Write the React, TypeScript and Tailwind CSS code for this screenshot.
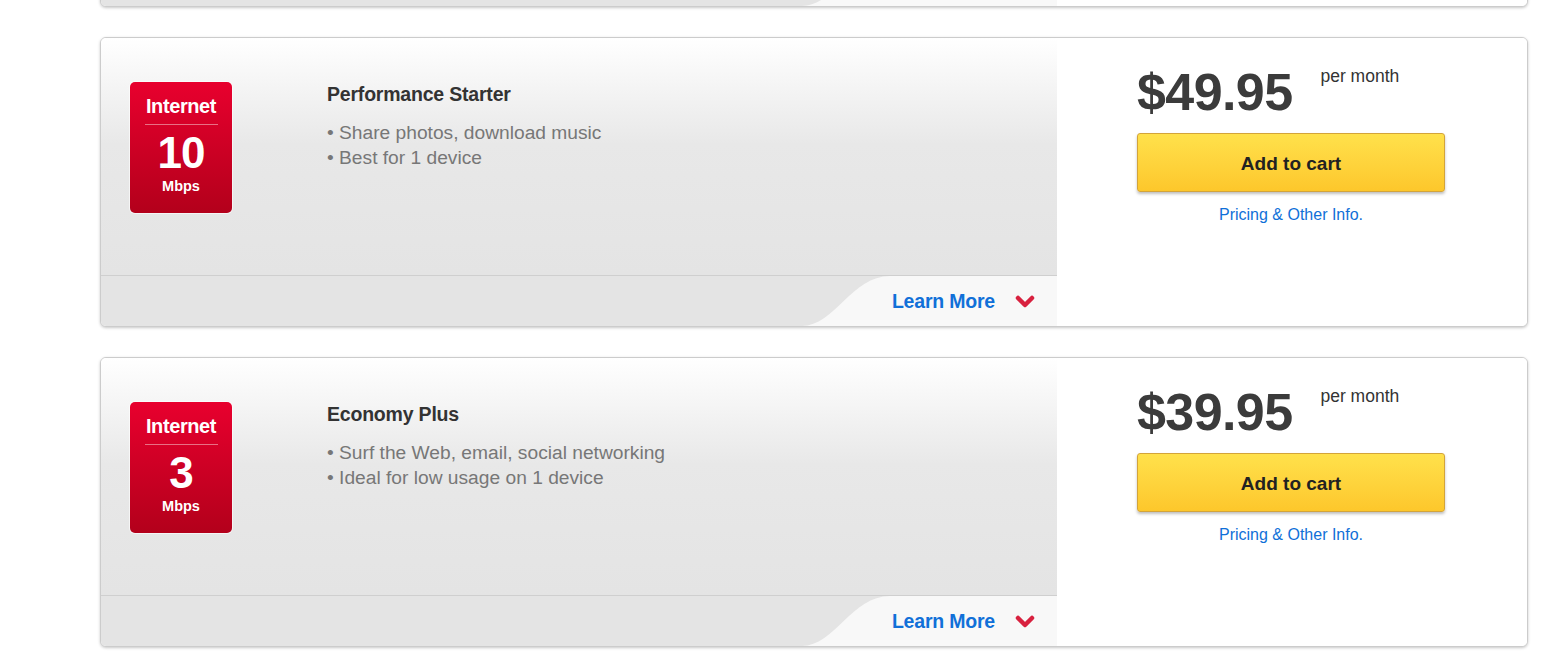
interface Plan {
  name: string;
  speed: string;
  bullets: string[];
  price: string;
}

const plans: Plan[] = [
  { name: "Performance Pro", speed: "20", bullets: ["Stream HD video", "Best for 3 devices"], price: "$59.95" },
  { name: "Performance Starter", speed: "10", bullets: ["Share photos, download music", "Best for 1 device"], price: "$49.95" },
  { name: "Economy Plus", speed: "3", bullets: ["Surf the Web, email, social networking", "Ideal for low usage on 1 device"], price: "$39.95" },
];

const SpeedBadge = ({ speed }: { speed: string }) => (
  <div className="w-[102px] h-[131px] rounded-[5px] bg-gradient-to-b from-[#e8002e] to-[#b3001b] flex flex-col items-center text-white font-bold pt-[11px] shadow-[0_0_0_1px_rgba(255,255,255,0.6)]">
    <span className="text-[20px] leading-[26px] tracking-[-0.4px]">Internet</span>
    <div className="w-[73px] h-px bg-[#f0a0ac] opacity-70 mt-[5px]" />
    <span className="text-[44px] leading-[46px] mt-[5px] tracking-[-1px]">{speed}</span>
    <span className="text-[14.5px] leading-[16px] mt-[2px]">Mbps</span>
  </div>
);

const Chevron = () => (
  <svg width="20" height="14" viewBox="0 0 20 14" className="ml-[20px] shrink-0">
    <path d="M3 3 L10 10 L17 3" fill="none" stroke="#d8213f" strokeWidth="4.5" strokeLinecap="round" strokeLinejoin="round" />
  </svg>
);

const PlanCard = ({ plan }: { plan: Plan }) => (
  <div className="h-[290px] rounded-[6px] border border-[#cccccc] bg-white shadow-[0_1px_3px_rgba(0,0,0,0.22)] flex overflow-hidden">
    {/* left info area */}
    <div className="w-[956px] flex flex-col">
      <div className="flex-1 bg-gradient-to-b from-[#ffffff] via-[#e8e8e8] via-45% to-[#e4e4e4] flex pl-[29px] pt-[44px]">
        <SpeedBadge speed={plan.speed} />
        <div className="ml-[95px]">
          <h3 className="text-[19.5px] leading-[24px] font-bold text-[#333333] tracking-[-0.2px]">{plan.name}</h3>
          <ul className="mt-[14px] text-[19.2px] leading-[25px] text-[#777777]">
            {plan.bullets.map((b) => (
              <li key={b}>• {b}</li>
            ))}
          </ul>
        </div>
      </div>
      {/* learn more bar */}
      <div className="h-[51px] border-t border-[#cfcfcf] bg-[#e4e4e4] flex justify-end">
        <svg width="88" height="50" viewBox="0 0 88 50" className="block -mr-px shrink-0">
          <path d="M0 50 C 32 50, 50 0, 88 0 L 88 50 Z" fill="#f8f8f8" />
        </svg>
        <div className="w-[168px] shrink-0 bg-[#f8f8f8] flex items-center justify-end pr-[22px] pt-[2px] whitespace-nowrap">
          <span className="text-[19.5px] font-bold text-[#1170d8] tracking-[-0.2px]">Learn More</span>
          <Chevron />
        </div>
      </div>
    </div>
    {/* price area */}
    <div className="flex-1 bg-white pl-[80px] pt-[24px]">
      <div className="flex items-start">
        <span className="text-[52px] leading-[60px] font-bold text-[#3b3b3b] tracking-[-0.6px]">{plan.price}</span>
        <span className="text-[17.5px] leading-[20px] text-[#333333] ml-[28px] mt-[4px]">per month</span>
      </div>
      <button className="mt-[11px] w-[308px] h-[59px] pt-[3px] rounded-[3px] border border-[#d3a43a] bg-gradient-to-b from-[#ffe14b] to-[#fdc72b] shadow-[0_2px_3px_rgba(0,0,0,0.25)] text-[19px] font-bold text-[#222222]">
        Add to cart
      </button>
      <div className="w-[308px] text-center mt-[11px]">
        <a className="text-[16px] text-[#1070d8]">Pricing &amp; Other Info.</a>
      </div>
    </div>
  </div>
);

export default function App() {
  return (
    <div className="min-h-[661px] bg-white overflow-hidden font-['Liberation_Sans',Arial,sans-serif]">
      <div className="ml-[100px] w-[1428px] -mt-[283px] flex flex-col gap-[30px]">
        {plans.map((p) => (
          <PlanCard key={p.name} plan={p} />
        ))}
      </div>
    </div>
  );
}
